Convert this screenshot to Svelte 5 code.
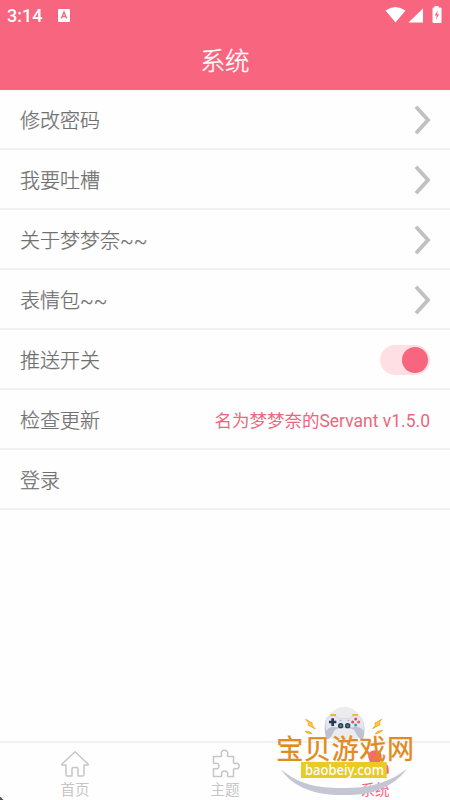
<script>
  const rows = [
    { label: '修改密码', kind: 'link' },
    { label: '我要吐槽', kind: 'link' },
    { label: '关于梦梦奈~~', kind: 'link' },
    { label: '表情包~~', kind: 'link' },
    { label: '推送开关', kind: 'switch' },
    { label: '检查更新', kind: 'version' },
    { label: '登录', kind: 'plain' }
  ];
</script>

<div class="screen">
  <header>
    <div class="status">
      <span class="time">3:14</span>
      <svg class="badge" width="12" height="13" viewBox="0 0 12 13">
        <rect width="12" height="13" rx="1.3" fill="#fff" />
        <path d="M3.3 9.4 6 3l2.7 6.4M4.2 7.5h3.6" fill="none" stroke="#f7667e" stroke-width="1.4" />
      </svg>
      <svg class="signals" width="60" height="24" viewBox="0 0 60 24">
        <path d="M.5 10.500Q10.500 3.500 20.500 10.500L10.500 22.500Z" fill="#fff" />
        <path d="M38 8.500V22.500H23.500Z" fill="#fff" />
        <path d="M49.500 7.500V6h4v1.500h2a1 1 0 0 1 1 1V22a1 1 0 0 1-1 1h-7a1 1 0 0 1-1-1V8.500a1 1 0 0 1 1-1Z" fill="#fff" />
        <path d="m52.800 10-3 5.500h2L50.900 20l3.200-5.700h-2Z" fill="#f7667e" />
      </svg>
    </div>
    <h1>系统</h1>
  </header>

  <main>
    {#each rows as row}
      <div class="row">
        <span class="label">{row.label}</span>
        {#if row.kind === 'link'}
          <svg class="chevron" width="18" height="30" viewBox="0 0 18 30">
            <path d="M3 1.800 15 15 3 28.200" fill="none" stroke="#c1c1c1" stroke-width="3.800" />
          </svg>
        {:else if row.kind === 'switch'}
          <div class="switch"><i></i></div>
        {:else if row.kind === 'version'}
          <span class="version">名为梦梦奈的Servant v1.5.0</span>
        {/if}
      </div>
    {/each}
  </main>

  <nav>
    <div class="tab">
      <svg width="30" height="30" viewBox="0 0 30 30">
        <path d="M15 2.800 28 15q.7 1-.5 1H24v9.500q0 1.500-1.500 1.500H18v-7q0-1.500-1.500-1.500h-3Q12 18.500 12 20v7H7.500Q6 27 6 25.500V16H2.500Q1.300 16 2 15Z" />
      </svg>
      <span>首页</span>
    </div>
    <div class="tab">
      <svg width="30" height="30" viewBox="0 0 30 30">
        <path d="M3.500 7.500H11Q12 7 11.300 5C10.500 0 18.500 0 17.700 5Q17 7 18 7.500h5.500v6q.5 1.500 2.500.8c4.200-.8 4.200 6.200 0 5.400q-2-.6-2.500.8V27.500h-5.700q-.8-.7-.1-2.200c.7-4.300-6.900-4.300-6.200 0q.7 1.500-.1 2.200H3.500V20q.8-.9 2.200-.2c4.300.8 4.300-6.400 0-5.600q-1.400.7-2.200-.2Z" />
      </svg>
      <span>主题</span>
    </div>
    <div class="tab active">
      <svg width="30" height="30" viewBox="0 0 30 30">
        <path d="M9 8Q9 2 15 2t6 6l-2 6 7 2q2 1 2 5v3H2v-3q0-4 2-5l7-2Z" />
      </svg>
      <span>系统</span>
    </div>
  </nav>

  <svg class="mark" width="160" height="100" viewBox="0 0 480 300">
    <circle cx="238" cy="76" r="55" fill="#ececef" />
    <path d="M196 49v-7h17v7M262 49v-7h17v7" fill="#eab83e" />
    <path d="M184 117C177 91 176 52 194 49C207 45 218 49 222 54H253C260 47 278 45 286 51C302 62 300 107 294 117C282 121 275 104 268 91C259 82 218 82 209 91C201 104 196 121 184 117Z" fill="#bfc1d0" />
    <path d="M184 92C177 63 183 48 202 48C213 48 219 51 223 55H253C259 49 265 48 275 48C293 48 300 66 295 92C283 78 271 79 263 82H213C205 78 193 79 184 92Z" fill="#e5e5ed" />
    <path d="M199 55h8v7h7v8h-7v8h-8v-8h-7v-8h7Z" fill="#24394e" />
    <g fill="#263e51"><circle cx="227" cy="77" r="8" /><circle cx="248" cy="77" r="8" /></g>
    <circle cx="227" cy="77" r="3.500" fill="#628497" /><circle cx="248" cy="77" r="3.500" fill="#628497" />
    <path d="M224 61h5M248 61h5" stroke="#71aaba" stroke-width="3" />
    <circle cx="272" cy="57" r="4.500" fill="#df4e54" /><circle cx="281" cy="66" r="4.500" fill="#ed626b" /><circle cx="272" cy="75" r="4.500" fill="#319fb1" /><circle cx="263" cy="66" r="4.500" fill="#df4e54" />
    <g fill="#fbcf35" stroke="#ec8f1d" stroke-width="2">
      <path d="m122 58 20 11-1 6 10 12-21-11 1-7ZM120 94l14 1 7 6-12-1ZM350 58l-20 11 1 7-8 10 22-12-2-6ZM353 91l-15 3-7 8 13-4Z" />
    </g>
    <path d="M47 207C104 257 171 265 235 264C313 265 377 246 426 206C382 266 311 287 235 285C158 286 88 267 47 207Z" fill="#c4c6d4" />
    <rect x="108" y="186" width="257" height="48" fill="#e8cb27" />
    <text class="site" x="34" y="176" textLength="413">宝贝游戏网</text>
    <text class="domain" x="120" y="224" textLength="237" lengthAdjust="spacingAndGlyphs">baobeiy.com</text>
  </svg>
  <i class="corner"></i>
</div>

<style>
  :global(body) { margin: 0; }
  .screen {
    position: relative;
    display: flex;
    flex-direction: column;
    width: 450px;
    height: 800px;
    overflow: hidden;
    background: #fefefe;
    color: #707070;
    font-family: Roboto, "Noto Sans CJK SC", sans-serif;
  }
  header { height: 90px; background: #f7667e; color: #fff; }
  .status { display: flex; align-items: flex-start; height: 31px; }
  .time { margin: 5px 0 0 7px; font-size: 18px; line-height: 21px; font-weight: 500; }
  .badge { margin: 9px 0 0 16px; }
  .signals { margin-left: auto; margin-right: 5px; }
  h1 { margin: 13px 0 0; text-align: center; font-size: 24.5px; line-height: 36px; font-weight: 300; -webkit-text-stroke: .35px; }
  .row {
    display: flex;
    align-items: center;
    justify-content: space-between;
    box-sizing: border-box;
    height: 60px;
    padding: 2px 20px 0;
    border-bottom: 2px solid #f1f1f1;
    font-size: 20px;
    font-weight: 300;
  }
  .label { padding-bottom: 2px; -webkit-text-stroke: .25px; }
  .chevron { margin-right: -1px; }
  .switch {
    display: flex;
    align-items: center;
    justify-content: flex-end;
    box-sizing: border-box;
    width: 50px;
    height: 30px;
    padding-right: 2px;
    border-radius: 15px;
    background: #fee0e4;
  }
  .switch i { width: 26px; height: 26px; border-radius: 50%; background: #f7667e; }
  .version { padding-bottom: 2px; color: #ee667e; font-size: 17.5px; font-weight: 400; }
  nav {
    display: flex;
    box-sizing: border-box;
    height: 59px;
    margin-top: auto;
    border-top: 2px solid #f1f1f1;
  }
  .tab {
    display: flex;
    flex: 1;
    flex-direction: column;
    align-items: center;
    padding-top: 6px;
    color: #c6c6c6;
    font-size: 14.5px;
    line-height: 23px;
  }
  .tab svg { flex: none; fill: none; stroke: currentColor; stroke-width: 1.500; stroke-linejoin: round; }
  .tab.active { color: #f7667e; }
  .tab.active svg { fill: currentColor; }
  .mark { position: absolute; left: 265px; top: 700px; }
  .site { fill: #e18a20; stroke: #e18a20; stroke-width: 1px; font: 400 81px "Noto Sans CJK SC", sans-serif; }
  .domain { fill: #fff; font: 500 44px "Noto Sans", sans-serif; }
  .corner { position: absolute; left: -3px; bottom: -3px; width: 5px; height: 6px; background: #555; transform: rotate(45deg); }
</style>
